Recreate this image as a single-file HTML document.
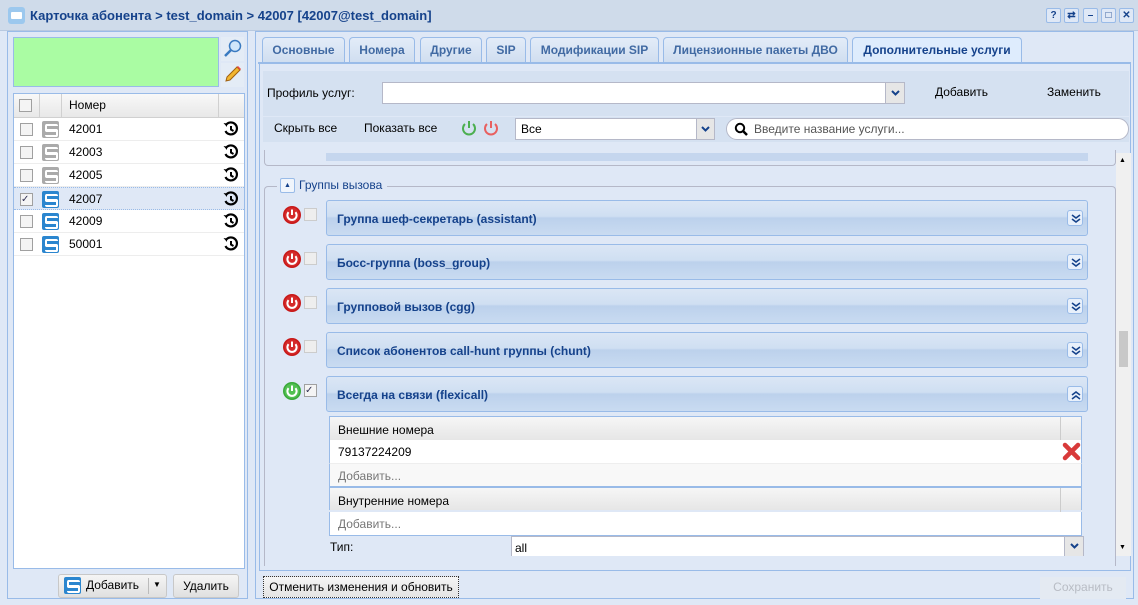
<!DOCTYPE html>
<html><head><meta charset="utf-8"><style>
*{box-sizing:border-box;margin:0;padding:0}
body{width:1138px;height:605px;overflow:hidden;background:#dfe8f6;font-family:"Liberation Sans",sans-serif;font-size:12px;color:#000;position:relative}
.a{position:absolute}
.title{left:0;top:0;width:1138px;height:31px;background:#cfdbea;border-bottom:1px solid #b8c9e0}
.tb{width:15px;height:15px;border:1px solid #99bbe8;border-radius:2px;background:#dfe8f6;top:8px;font-size:10px;text-align:center;line-height:13px;color:#15428b;font-weight:bold}
.cb{width:13px;height:13px;border:1px solid #a0a0a0;background:#f4f4f4}
.row{left:14px;width:230px;height:23px;border-bottom:1px solid #ededed;background:#fff}
.row .n{left:55px;top:4px;font-size:12px}
.sic{left:28px;top:3px;width:17px;height:17px;border-radius:2px}
.sic::before,.sic::after{content:"";position:absolute;left:3px;width:11px;height:4px;border:2px solid #fff;border-radius:2px}
.sic::before{top:3px;border-right:none}.sic::after{top:8px;border-left:none}
.tab{top:37px;height:25px;border:1px solid #99bbe8;border-bottom:none;border-radius:4px 4px 0 0;background:linear-gradient(#e3ecf8,#d0def0);color:#416aa3;font-weight:bold;font-size:12px;text-align:center;line-height:24px}
.pan{left:326px;width:762px;height:36px;border:1px solid #99bbe8;border-radius:3px;background:linear-gradient(#dbe6f5 0,#cfdff2 45%,#bcd1ec 50%,#c9dbf1 100%);color:#15428b;font-weight:bold;font-size:12px;padding:11px 0 0 10px}
.exp{right:4px;top:9px;width:16px;height:16px;border:1px solid #99bbe8;border-radius:3px;background:#e8f0fb}
.pw{left:283px;width:18px;height:18px}
.gh{left:329px;width:753px;height:24px;background:linear-gradient(#f6f6f6,#e6e6e6);border-left:1px solid #99bbe8;border-right:1px solid #99bbe8;padding:6px 0 0 8px}
.gr{left:329px;width:753px;height:23px;background:#fff;border-left:1px solid #99bbe8;border-right:1px solid #99bbe8;padding:5px 0 0 8px}
</style></head><body>
<svg width="0" height="0" style="position:absolute"><defs>
<g id="pr"><circle cx="9" cy="9" r="9" fill="#c81818"/><circle cx="9" cy="9" r="7.5" fill="#d42a2a"/><path d="M5.6 6.2A4.6 4.6 0 1 0 12.4 6.2" fill="none" stroke="#fff" stroke-width="2"/><path d="M9 3.5V9" stroke="#fff" stroke-width="2"/></g>
<g id="pg"><circle cx="9" cy="9" r="9" fill="#3aa83a"/><circle cx="9" cy="9" r="7.5" fill="#52c052"/><path d="M5.6 6.2A4.6 4.6 0 1 0 12.4 6.2" fill="none" stroke="#fff" stroke-width="2"/><path d="M9 3.5V9" stroke="#fff" stroke-width="2"/></g>
<g id="dn"><path d="M4 4l4 3 4-3M4 8l4 3 4-3" fill="none" stroke="#15428b" stroke-width="1.6"/></g>
<g id="up"><path d="M4 8l4-3 4 3M4 12l4-3 4 3" fill="none" stroke="#15428b" stroke-width="1.6"/></g>
<g id="hist"><path d="M3 4A6 6 0 1 1 2.5 10" fill="none" stroke="#000" stroke-width="2.2"/><path d="M0.5 2l3.5 0.5 0 3.5z" fill="#000"/><path d="M8 5v3.5l2.5 1.5" fill="none" stroke="#000" stroke-width="2"/></g>
</defs></svg>
<div class="a title"></div>
<div class="a" style="left:8px;top:7px;width:17px;height:17px;background:#9cc8ee;border-radius:3px"><div class="a" style="left:3px;top:5px;width:11px;height:7px;background:#fff;border-radius:1px"></div></div>
<div class="a" style="left:30px;top:8px;font-size:13px;font-weight:bold;color:#15428b">Карточка абонента &gt; test_domain &gt; 42007 [42007@test_domain]</div>
<div class="a tb" style="left:1046px">?</div><div class="a tb" style="left:1064px">⇄</div><div class="a tb" style="left:1083px">–</div><div class="a tb" style="left:1101px">□</div><div class="a tb" style="left:1119px">✕</div>

<div class="a" style="left:7px;top:31px;width:241px;height:568px;border:1px solid #99bbe8;background:#dfe8f6"></div>
<div class="a" style="left:13px;top:37px;width:206px;height:50px;background:#aafca3;border:1px solid #99bbe8"></div>
<div class="a" style="left:221px;top:37px;width:23px;height:24px;background:#e4ecf6"><svg width="23" height="24"><circle cx="14" cy="9" r="5.5" fill="#cfe6fa" stroke="#3a7ac0" stroke-width="1.5"/><path d="M10 13l-6 6" stroke="#3a7ac0" stroke-width="2.5"/></svg></div>
<div class="a" style="left:221px;top:63px;width:23px;height:24px;background:#e4ecf6"><svg width="23" height="24"><path d="M16 4l3 3-10 10-4 1 1-4z" fill="#f2b630" stroke="#a06010" stroke-width="1"/><path d="M16 4l3 3 1-1-3-3z" fill="#e44"/></svg></div>
<div class="a" style="left:13px;top:93px;width:232px;height:476px;background:#fff;border:1px solid #99bbe8"></div>
<div class="a" style="left:14px;top:94px;width:230px;height:24px;background:linear-gradient(#f8f8f8,#e8e8e8);border-bottom:1px solid #d0d0d0"></div>
<div class="a" style="left:39px;top:94px;width:1px;height:24px;background:#d0d0d0"></div>
<div class="a" style="left:61px;top:94px;width:1px;height:24px;background:#d0d0d0"></div>
<div class="a" style="left:218px;top:94px;width:1px;height:24px;background:#d0d0d0"></div>
<div class="a cb" style="left:19px;top:99px"></div>
<div class="a" style="left:69px;top:98px">Номер</div>
<div class="a row" style="top:118px"><div class="a cb" style="left:6px;top:5px"></div><div class="a sic" style="background:#aaa"></div><div class="a n">42001</div><svg class="a" style="left:209px;top:3px" width="16" height="16"><use href="#hist"/></svg></div>
<div class="a row" style="top:141px"><div class="a cb" style="left:6px;top:5px"></div><div class="a sic" style="background:#aaa"></div><div class="a n">42003</div><svg class="a" style="left:209px;top:3px" width="16" height="16"><use href="#hist"/></svg></div>
<div class="a row" style="top:164px"><div class="a cb" style="left:6px;top:5px"></div><div class="a sic" style="background:#aaa"></div><div class="a n">42005</div><svg class="a" style="left:209px;top:3px" width="16" height="16"><use href="#hist"/></svg></div>
<div class="a row" style="top:187px;background:#dfe8f6;border-top:1px dotted #99bbe8;border-bottom:1px dotted #99bbe8"><div class="a cb" style="left:6px;top:5px;font-size:10px;line-height:11px;color:#335">✓</div><div class="a sic" style="background:#2b86cf"></div><div class="a n">42007</div><svg class="a" style="left:209px;top:3px" width="16" height="16"><use href="#hist"/></svg></div>
<div class="a row" style="top:210px"><div class="a cb" style="left:6px;top:5px"></div><div class="a sic" style="background:#2b86cf"></div><div class="a n">42009</div><svg class="a" style="left:209px;top:3px" width="16" height="16"><use href="#hist"/></svg></div>
<div class="a row" style="top:233px"><div class="a cb" style="left:6px;top:5px"></div><div class="a sic" style="background:#2b86cf"></div><div class="a n">50001</div><svg class="a" style="left:209px;top:3px" width="16" height="16"><use href="#hist"/></svg></div>
<div class="a" style="left:58px;top:574px;width:109px;height:24px;border:1px solid #c8c8c8;border-radius:3px;background:linear-gradient(#f5f5f5,#e0e0e0)"></div>
<div class="a sic" style="left:64px;top:577px;background:#2b86cf"></div>
<div class="a" style="left:86px;top:578px">Добавить</div>
<div class="a" style="left:148px;top:578px;width:1px;height:16px;background:#bbb"></div>
<div class="a" style="left:153px;top:580px;font-size:8px">▼</div>
<div class="a" style="left:173px;top:574px;width:66px;height:24px;border:1px solid #c8c8c8;border-radius:3px;background:linear-gradient(#f5f5f5,#e0e0e0);text-align:center;line-height:22px">Удалить</div>

<div class="a" style="left:255px;top:31px;width:879px;height:568px;background:#dfe8f6;border:1px solid #99bbe8"></div>
<div class="a tab" style="left:262px;width:83px">Основные</div>
<div class="a tab" style="left:349px;width:66px">Номера</div>
<div class="a tab" style="left:420px;width:62px">Другие</div>
<div class="a tab" style="left:486px;width:40px">SIP</div>
<div class="a tab" style="left:530px;width:129px">Модификации SIP</div>
<div class="a tab" style="left:663px;width:185px">Лицензионные пакеты ДВО</div>
<div class="a tab" style="left:852px;width:170px;background:#deecfd;color:#15428b;height:26px">Дополнительные услуги</div>
<div class="a" style="left:258px;top:62px;width:873px;height:2px;background:#99bbe8"></div>
<div class="a" style="left:259px;top:64px;width:872px;height:507px;border:1px solid #99bbe8;border-top:none;background:#dfe8f6"></div>
<div class="a" style="left:263px;top:71px;width:866px;height:45px;background:#d5e1f1"></div>
<div class="a" style="left:267px;top:86px">Профиль услуг:</div>
<div class="a" style="left:382px;top:82px;width:523px;height:22px;background:#fff;border:1px solid #b5b8c8"></div>
<div class="a" style="left:885px;top:83px;width:19px;height:20px;background:#e6e6e6;border-left:1px solid #b5b8c8"><svg width="19" height="20"><path d="M6 8l3.5 3.5L13 8" fill="none" stroke="#15428b" stroke-width="2"/></svg></div>
<div class="a" style="left:935px;top:85px">Добавить</div>
<div class="a" style="left:1047px;top:85px">Заменить</div>
<div class="a" style="left:263px;top:117px;width:866px;height:25px;background:#d5e1f1"></div>
<div class="a" style="left:274px;top:121px">Скрыть все</div>
<div class="a" style="left:364px;top:121px">Показать все</div>
<svg class="a" style="left:460px;top:119px" width="18" height="18"><path d="M5 5A6 6 0 1 0 13 5" fill="none" stroke="#4caf50" stroke-width="2"/><path d="M9 2V9" stroke="#4caf50" stroke-width="2"/></svg>
<svg class="a" style="left:482px;top:119px" width="18" height="18"><path d="M5 5A6 6 0 1 0 13 5" fill="none" stroke="#e86060" stroke-width="2"/><path d="M9 2V9" stroke="#e86060" stroke-width="2"/></svg>
<div class="a" style="left:515px;top:118px;width:200px;height:22px;background:#fff;border:1px solid #b5b8c8;padding:3px 5px">Все</div>
<div class="a" style="left:696px;top:119px;width:18px;height:20px;background:#e6e6e6;border-left:1px solid #b5b8c8"><svg width="18" height="20"><path d="M5 8l3.5 3.5L12 8" fill="none" stroke="#15428b" stroke-width="2"/></svg></div>
<div class="a" style="left:726px;top:118px;width:403px;height:22px;background:#fff;border:1px solid #b5b8c8;border-radius:11px;padding:3px 0 0 27px;color:#555">Введите название услуги...</div>
<svg class="a" style="left:733px;top:121px" width="16" height="16"><circle cx="7" cy="7" r="4.2" fill="none" stroke="#000" stroke-width="2"/><path d="M10 10l4 4" stroke="#000" stroke-width="2.5"/></svg>
<div class="a" style="left:1116px;top:153px;width:15px;height:403px;background:#f0f0f0"></div>
<div class="a" style="left:1119px;top:331px;width:9px;height:36px;background:#c8c8c8"></div>
<div class="a" style="left:1119px;top:157px;font-size:7px">▲</div>
<div class="a" style="left:1119px;top:544px;font-size:7px">▼</div>
<div class="a" style="left:264px;top:150px;width:852px;height:16px;border:1px solid #b5b8c8;border-top:none;border-radius:0 0 4px 4px"></div>
<div class="a" style="left:326px;top:153px;width:762px;height:8px;background:#c5d6ee"></div>
<div class="a" style="left:264px;top:186px;width:852px;height:380px;border:1px solid #b5b8c8;border-bottom:none;border-radius:4px 4px 0 0"></div>
<div class="a" style="left:277px;top:178px;width:110px;height:16px;background:#dfe8f6"></div>
<div class="a" style="left:280px;top:178px;width:15px;height:15px;border:1px solid #99bbe8;border-radius:2px;background:#f0f5fc;font-size:7px;color:#15428b;text-align:center;line-height:13px">▲</div>
<div class="a" style="left:299px;top:178px;color:#15428b">Группы вызова</div>

<svg class="a pw" style="top:206px"><use href="#pr"/></svg><div class="a cb" style="left:304px;top:208px;border-color:#ccc;background:#eee"></div>
<div class="a pan" style="top:200px">Группа шеф-секретарь (assistant)<svg class="a exp"><use href="#dn"/></svg></div>
<svg class="a pw" style="top:250px"><use href="#pr"/></svg><div class="a cb" style="left:304px;top:252px;border-color:#ccc;background:#eee"></div>
<div class="a pan" style="top:244px">Босс-группа (boss_group)<svg class="a exp"><use href="#dn"/></svg></div>
<svg class="a pw" style="top:294px"><use href="#pr"/></svg><div class="a cb" style="left:304px;top:296px;border-color:#ccc;background:#eee"></div>
<div class="a pan" style="top:288px">Групповой вызов (cgg)<svg class="a exp"><use href="#dn"/></svg></div>
<svg class="a pw" style="top:338px"><use href="#pr"/></svg><div class="a cb" style="left:304px;top:340px;border-color:#ccc;background:#eee"></div>
<div class="a pan" style="top:332px">Список абонентов call-hunt группы (chunt)<svg class="a exp"><use href="#dn"/></svg></div>
<svg class="a pw" style="top:382px"><use href="#pg"/></svg><div class="a cb" style="left:304px;top:384px;font-size:10px;line-height:11px;color:#335">✓</div>
<div class="a pan" style="top:376px">Всегда на связи (flexicall)<svg class="a exp"><use href="#up"/></svg></div>

<div class="a gh" style="top:416px;border-top:1px solid #99bbe8">Внешние номера</div>
<div class="a" style="left:1060px;top:417px;width:1px;height:23px;background:#ccc"></div>
<div class="a gr" style="top:440px">79137224209</div>
<svg class="a" style="left:1062px;top:442px" width="19" height="19"><path d="M3 3L16 16M16 3L3 16" stroke="#d83a3a" stroke-width="4.5" stroke-linecap="round"/></svg>
<div class="a gr" style="top:463px;background:#f8f8f8;color:#777;border-top:1px solid #eee">Добавить...</div>
<div class="a gh" style="top:486px;border-top:2px solid #99bbe8">Внутренние номера</div>
<div class="a" style="left:1060px;top:488px;width:1px;height:24px;background:#ccc"></div>
<div class="a gr" style="top:512px;color:#777;border-bottom:1px solid #99bbe8;height:24px">Добавить...</div>
<div class="a" style="left:330px;top:540px">Тип:</div>
<div class="a" style="left:511px;top:536px;width:573px;height:20px;background:#fff;border:1px solid #b5b8c8;border-bottom:none;padding:4px 3px">all</div>
<div class="a" style="left:1064px;top:537px;width:19px;height:19px;background:#e6e6e6;border-left:1px solid #b5b8c8"><svg width="19" height="19"><path d="M6 7l3.5 3.5L13 7" fill="none" stroke="#15428b" stroke-width="2"/></svg></div>

<div class="a" style="left:263px;top:576px;width:196px;height:22px;border:1px dotted #333;background:linear-gradient(#f5f5f5,#e4e4e4);text-align:center;line-height:20px">Отменить изменения и обновить</div>
<div class="a" style="left:1040px;top:577px;width:86px;height:22px;background:#e4eaf2;color:#b8bcc4;text-align:center;line-height:21px">Сохранить</div>
</body></html>
